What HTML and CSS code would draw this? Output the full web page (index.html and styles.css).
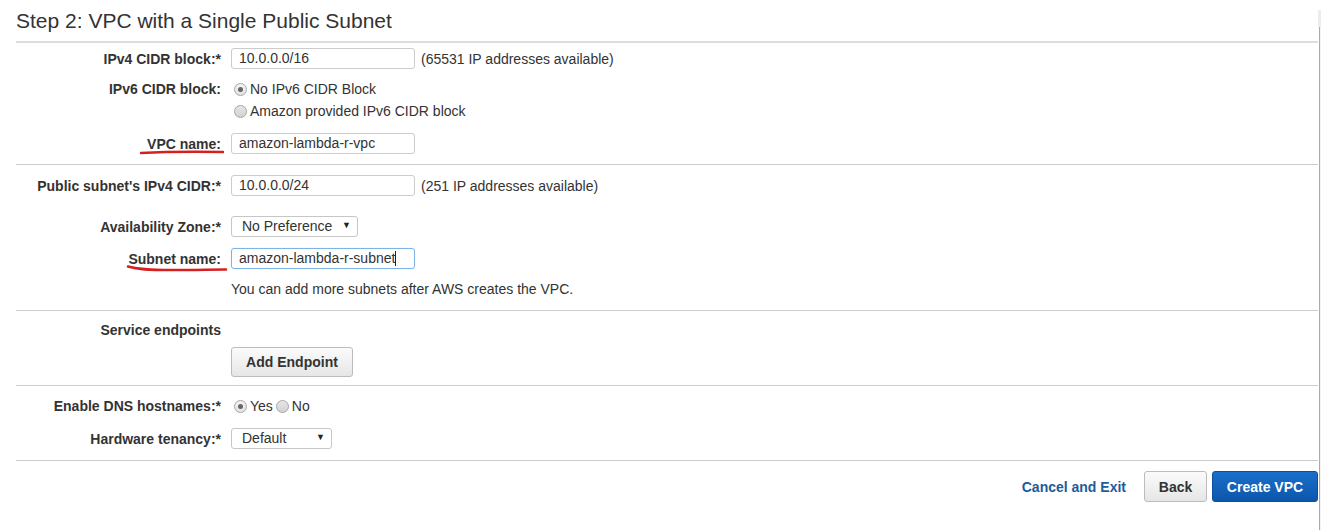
FILE: index.html
```html
<!DOCTYPE html>
<html>
<head>
<meta charset="utf-8">
<link rel="stylesheet" href="styles.css">
</head>
<body>
<div class="page">
  <h1 class="title">Step 2: VPC with a Single Public Subnet</h1>

  <section class="sec sec1">
    <div class="row">
      <label class="lbl">IPv4 CIDR block:*</label>
      <div class="ctl">
        <div class="input">10.0.0.0/16</div>
        <span class="note">(65531 IP addresses available)</span>
      </div>
    </div>
    <div class="row row-top mt9">
      <label class="lbl lh22">IPv6 CIDR block:</label>
      <div class="radios">
        <div class="ropt"><span class="radio on"></span>No IPv6 CIDR Block</div>
        <div class="ropt"><span class="radio"></span>Amazon provided IPv6 CIDR block</div>
      </div>
    </div>
    <div class="row mt11">
      <label class="lbl"><span class="mark">VPC name:<svg class="ul ul1" width="84" height="6" viewBox="0 0 84 6"><path d="M1 4 C 20 3, 50 2.5, 83 3" stroke="#d62020" stroke-width="2.6" fill="none" stroke-linecap="round"/></svg></span></label>
      <div class="ctl"><div class="input">amazon-lambda-r-vpc</div></div>
    </div>
  </section>

  <section class="sec sec2">
    <div class="row">
      <label class="lbl">Public subnet's IPv4 CIDR:*</label>
      <div class="ctl">
        <div class="input">10.0.0.0/24</div>
        <span class="note">(251 IP addresses available)</span>
      </div>
    </div>
    <div class="row mt20">
      <label class="lbl">Availability Zone:*</label>
      <div class="ctl"><div class="select w127">No Preference<span class="arrow">▼</span></div></div>
    </div>
    <div class="row mt11">
      <label class="lbl"><span class="mark">Subnet name:<svg class="ul ul2" width="102" height="10" viewBox="0 0 102 10"><path d="M2 2.5 C 12 5.5, 22 6, 45 6 C 70 6, 85 5.5, 100 5.5" stroke="#d62020" stroke-width="2.6" fill="none" stroke-linecap="round"/></svg></span></label>
      <div class="ctl"><div class="input focus">amazon-lambda-r-subnet<span class="caret"></span></div></div>
    </div>
    <div class="row mt11">
      <span></span>
      <div class="hint">You can add more subnets after AWS creates the VPC.</div>
    </div>
  </section>

  <section class="sec sec3">
    <div class="row">
      <label class="lbl lh18">Service endpoints</label>
      <span></span>
    </div>
    <div class="row mt8">
      <span></span>
      <div class="ctl"><button class="btn btn-add">Add Endpoint</button></div>
    </div>
  </section>

  <section class="sec sec4">
    <div class="row">
      <label class="lbl lh22">Enable DNS hostnames:*</label>
      <div class="ctl inline">
        <span class="ropt"><span class="radio on"></span>Yes</span>
        <span class="ropt"><span class="radio"></span>No</span>
      </div>
    </div>
    <div class="row mt11">
      <label class="lbl">Hardware tenancy:*</label>
      <div class="ctl"><div class="select w101">Default<span class="arrow">▼</span></div></div>
    </div>
  </section>

  <footer class="footer">
    <a class="link">Cancel and Exit</a>
    <button class="btn btn-back">Back</button>
    <button class="btn btn-primary">Create VPC</button>
  </footer>
</div>
<div class="scrollbar"><div class="sb-top"></div><div class="sb-track"></div></div>
</body>
</html>
```

FILE: styles.css
```css
* { box-sizing: border-box; }
html, body { margin: 0; padding: 0; background: #fff; }
body {
  font-family: Arial, "Liberation Sans", sans-serif;
  font-size: 14px;
  color: #333;
  width: 1321px;
  height: 530px;
  overflow: hidden;
}
.page {
  padding: 0 3px 0 16px;
}
.title {
  margin: 0;
  font-size: 21px;
  font-weight: normal;
  line-height: 24px;
  padding: 9px 0 8px 0;
  color: #333;
  border-bottom: 2px solid #ddd;
}
.sec { border-bottom: 1px solid #ccc; }
.sec1 { padding: 5px 0 10px 0; }
.sec2 { padding: 10px 0 12px 0; }
.sec3 { padding: 10px 0 8px 0; }
.sec4 { padding: 9px 0 11px 0; }

.row {
  display: grid;
  grid-template-columns: 205px 1fr;
  column-gap: 10px;
  align-items: center;
}
.row-top { align-items: start; }
.mt8 { margin-top: 8px; }
.mt9 { margin-top: 9px; }
.mt11 { margin-top: 11px; }
.mt20 { margin-top: 20px; }

.lbl {
  text-align: right;
  font-weight: bold;
  font-size: 14px;
  color: #333;
  white-space: nowrap;
}
.lh22 { line-height: 22px; }
.lh18 { line-height: 18px; }
.mark { position: relative; display: inline-block; }
.ul { position: absolute; pointer-events: none; }
.ul1 { left: -7px; top: 13px; }
.ul2 { left: -2px; top: 13px; }

.ctl { display: flex; align-items: center; }
.input {
  width: 184px;
  height: 21px;
  border: 1px solid #ccc;
  border-radius: 3px;
  padding: 0 7px;
  line-height: 19px;
  font-size: 14px;
  color: #333;
  position: relative;
}
.input.focus { border-color: #7fb3e6; box-shadow: 0 0 1px #a9cdf0; }
.caret {
  display: inline-block;
  width: 1px;
  height: 15px;
  background: #222;
  vertical-align: -3px;
}
.note { margin-left: 6px; color: #333; }
.hint { line-height: 18px; color: #333; }

.radios { display: flex; flex-direction: column; }
.ropt {
  display: flex;
  align-items: center;
  line-height: 22px;
  height: 22px;
  color: #333;
}
.radio {
  width: 13px;
  height: 13px;
  border-radius: 50%;
  border: 1px solid #a6a6a6;
  background: linear-gradient(#e6e6e6, #d2d2d2);
  margin: 0 3px 0 3px;
  position: relative;
  flex: none;
}
.radio.on { background: linear-gradient(#f4f4f4, #e2e2e2); }
.radio.on::after {
  content: "";
  position: absolute;
  left: 3px; top: 3px;
  width: 5px; height: 5px;
  border-radius: 50%;
  background: #666;
}
.inline .ropt + .ropt .radio { margin-left: 3px; }

.select {
  height: 21px;
  border: 1px solid #c6c6c6;
  border-radius: 3px;
  padding: 0 0 0 10px;
  line-height: 19px;
  font-size: 14px;
  color: #333;
  position: relative;
  background: #fff;
}
.w127 { width: 127px; }
.w101 { width: 101px; }
.arrow {
  position: absolute;
  right: 6px;
  top: 0;
  font-size: 9px;
  color: #222;
  line-height: 17px;
}

.btn {
  font-family: Arial, "Liberation Sans", sans-serif;
  font-weight: bold;
  font-size: 14px;
  height: 31px;
  border-radius: 3px;
  cursor: pointer;
  padding: 0;
}
.btn-add, .btn-back {
  background: linear-gradient(#fbfbfb, #e6e6e6);
  border: 1px solid #bcbcbc;
  color: #333;
}
.btn-add { width: 122px; height: 30px; }
.btn-back { width: 63px; }
.btn-primary {
  width: 106px;
  background: linear-gradient(#1a6fcb, #0c56ab);
  border: 1px solid #0b4f9e;
  color: #fff;
  margin-left: 5px;
}

.footer {
  display: flex;
  justify-content: flex-end;
  align-items: center;
  padding-top: 10px;
}
.link {
  color: #1d5b9c;
  font-weight: bold;
  font-size: 14px;
  margin-right: 18px;
  cursor: pointer;
}

.scrollbar {
  position: absolute;
  top: 10px;
  right: 0;
  width: 3px;
  height: 520px;
  display: flex;
  flex-direction: column;
}
.sb-top { height: 17px; background: #ececec; }
.sb-track { flex: 1; border-left: 1px solid #fff; background: linear-gradient(90deg, #aaa 0 1px, #f3f3f3 1px); }
```
